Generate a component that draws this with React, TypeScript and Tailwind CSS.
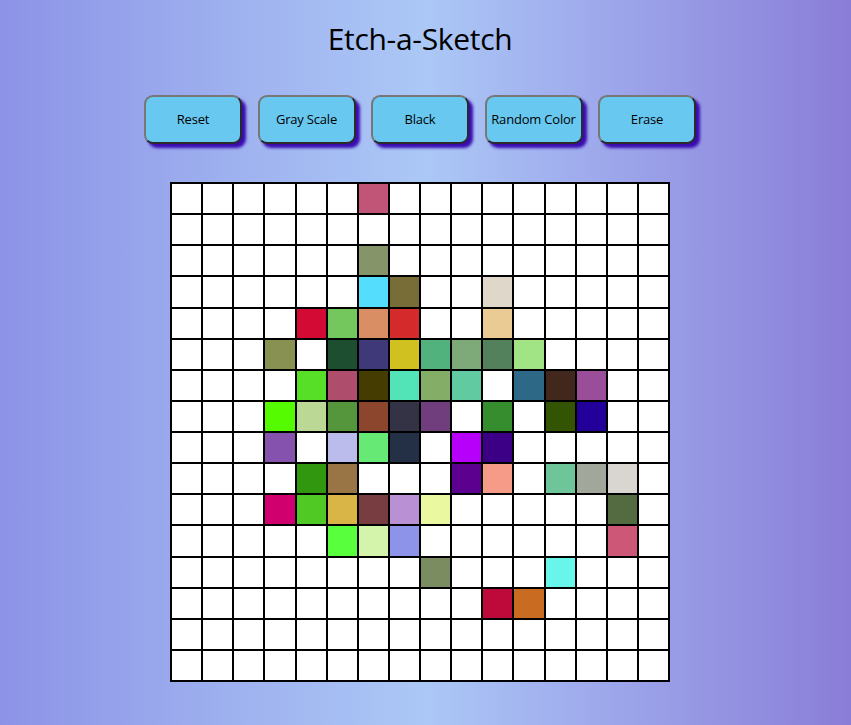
import React from "react";

const W = "#ffffff";
const rows: Record<number, Record<number, string>> = {
  0: { 6: "#c05577" },
  2: { 6: "#86946a" },
  3: { 6: "#55ddfd", 7: "#786c37", 10: "#dfd8ca" },
  4: { 4: "#d30a34", 5: "#74c75c", 6: "#d98e63", 7: "#d42a2b", 10: "#e9cb93" },
  5: { 3: "#889152", 5: "#1c4e2f", 6: "#3f3879", 7: "#d0c020", 8: "#51b27d", 9: "#7daa78", 10: "#53815c", 11: "#a0e486" },
  6: { 4: "#57df27", 5: "#ae4e6c", 6: "#453c02", 7: "#52e3b7", 8: "#84ad68", 9: "#62caa0", 11: "#2d6986", 12: "#42271c", 13: "#9a4e9a" },
  7: { 3: "#55fb00", 4: "#bbd994", 5: "#55963c", 6: "#8d462e", 7: "#333345", 8: "#703e7c", 10: "#358d2e", 12: "#335402", 13: "#24009b" },
  8: { 3: "#8552ae", 5: "#bbbcec", 6: "#66ea75", 7: "#233045", 9: "#b700f9", 10: "#3c0086" },
  9: { 4: "#30970f", 5: "#997545", 9: "#5c008f", 10: "#f59b88", 12: "#6fc59a", 13: "#a1a89b", 14: "#d9d5d0" },
  10: { 3: "#d0016f", 4: "#50c924", 5: "#d9b447", 6: "#773d40", 7: "#ba90d4", 8: "#eaf99f", 14: "#546b42" },
  11: { 5: "#58ff3d", 6: "#d4f4ab", 7: "#8c93e8", 14: "#cc5777" },
  12: { 8: "#7a8c60", 12: "#68f5ea" },
  13: { 10: "#bd0a3b", 11: "#c96b20" },
};

const buttons = ["Reset", "Gray Scale", "Black", "Random Color", "Erase"];

export default function App() {
  const cells: React.ReactNode[] = [];
  for (let r = 0; r < 16; r++) {
    for (let c = 0; c < 16; c++) {
      const color = (rows[r] && rows[r][c]) || W;
      cells.push(
        <div
          key={`${r}-${c}`}
          className="border border-black box-border"
          style={{ backgroundColor: color }}
        />
      );
    }
  }
  return (
    <div
      className="min-h-[725px] w-full bg-[linear-gradient(90deg,#8c93e7_0%,#a0b4f0_30%,#abc8f6_50%,#9ea9ec_70%,#8a7dd8_100%)]"
      style={{ fontFamily: '"Open Sans", "Noto Sans", sans-serif' }}
    >
      <div className="w-[840px] flex flex-col items-center">
        <h1 className="mt-[19px] text-[30px] leading-[40px] font-medium text-black tracking-[-0.3px]">
          Etch-a-Sketch
        </h1>
        <div className="mt-[36px] flex gap-[15.5px]">
          {buttons.map((b) => (
            <button
              key={b}
              className="w-[98px] h-[49px] rounded-[9px] bg-[#68c8f0] text-[13px] text-black border-2 border-t-[#777777] border-l-[#777777] border-b-[#2a2a2a] border-r-[#2a2a2a] shadow-[4px_4px_3px_#3a0cb0] tracking-[-0.2px]"
            >
              {b}
            </button>
          ))}
        </div>
        <div className="mt-[38px] w-[500px] h-[500px] border border-black grid grid-cols-16 grid-rows-16 bg-white">
          {cells}
        </div>
      </div>
    </div>
  );
}
